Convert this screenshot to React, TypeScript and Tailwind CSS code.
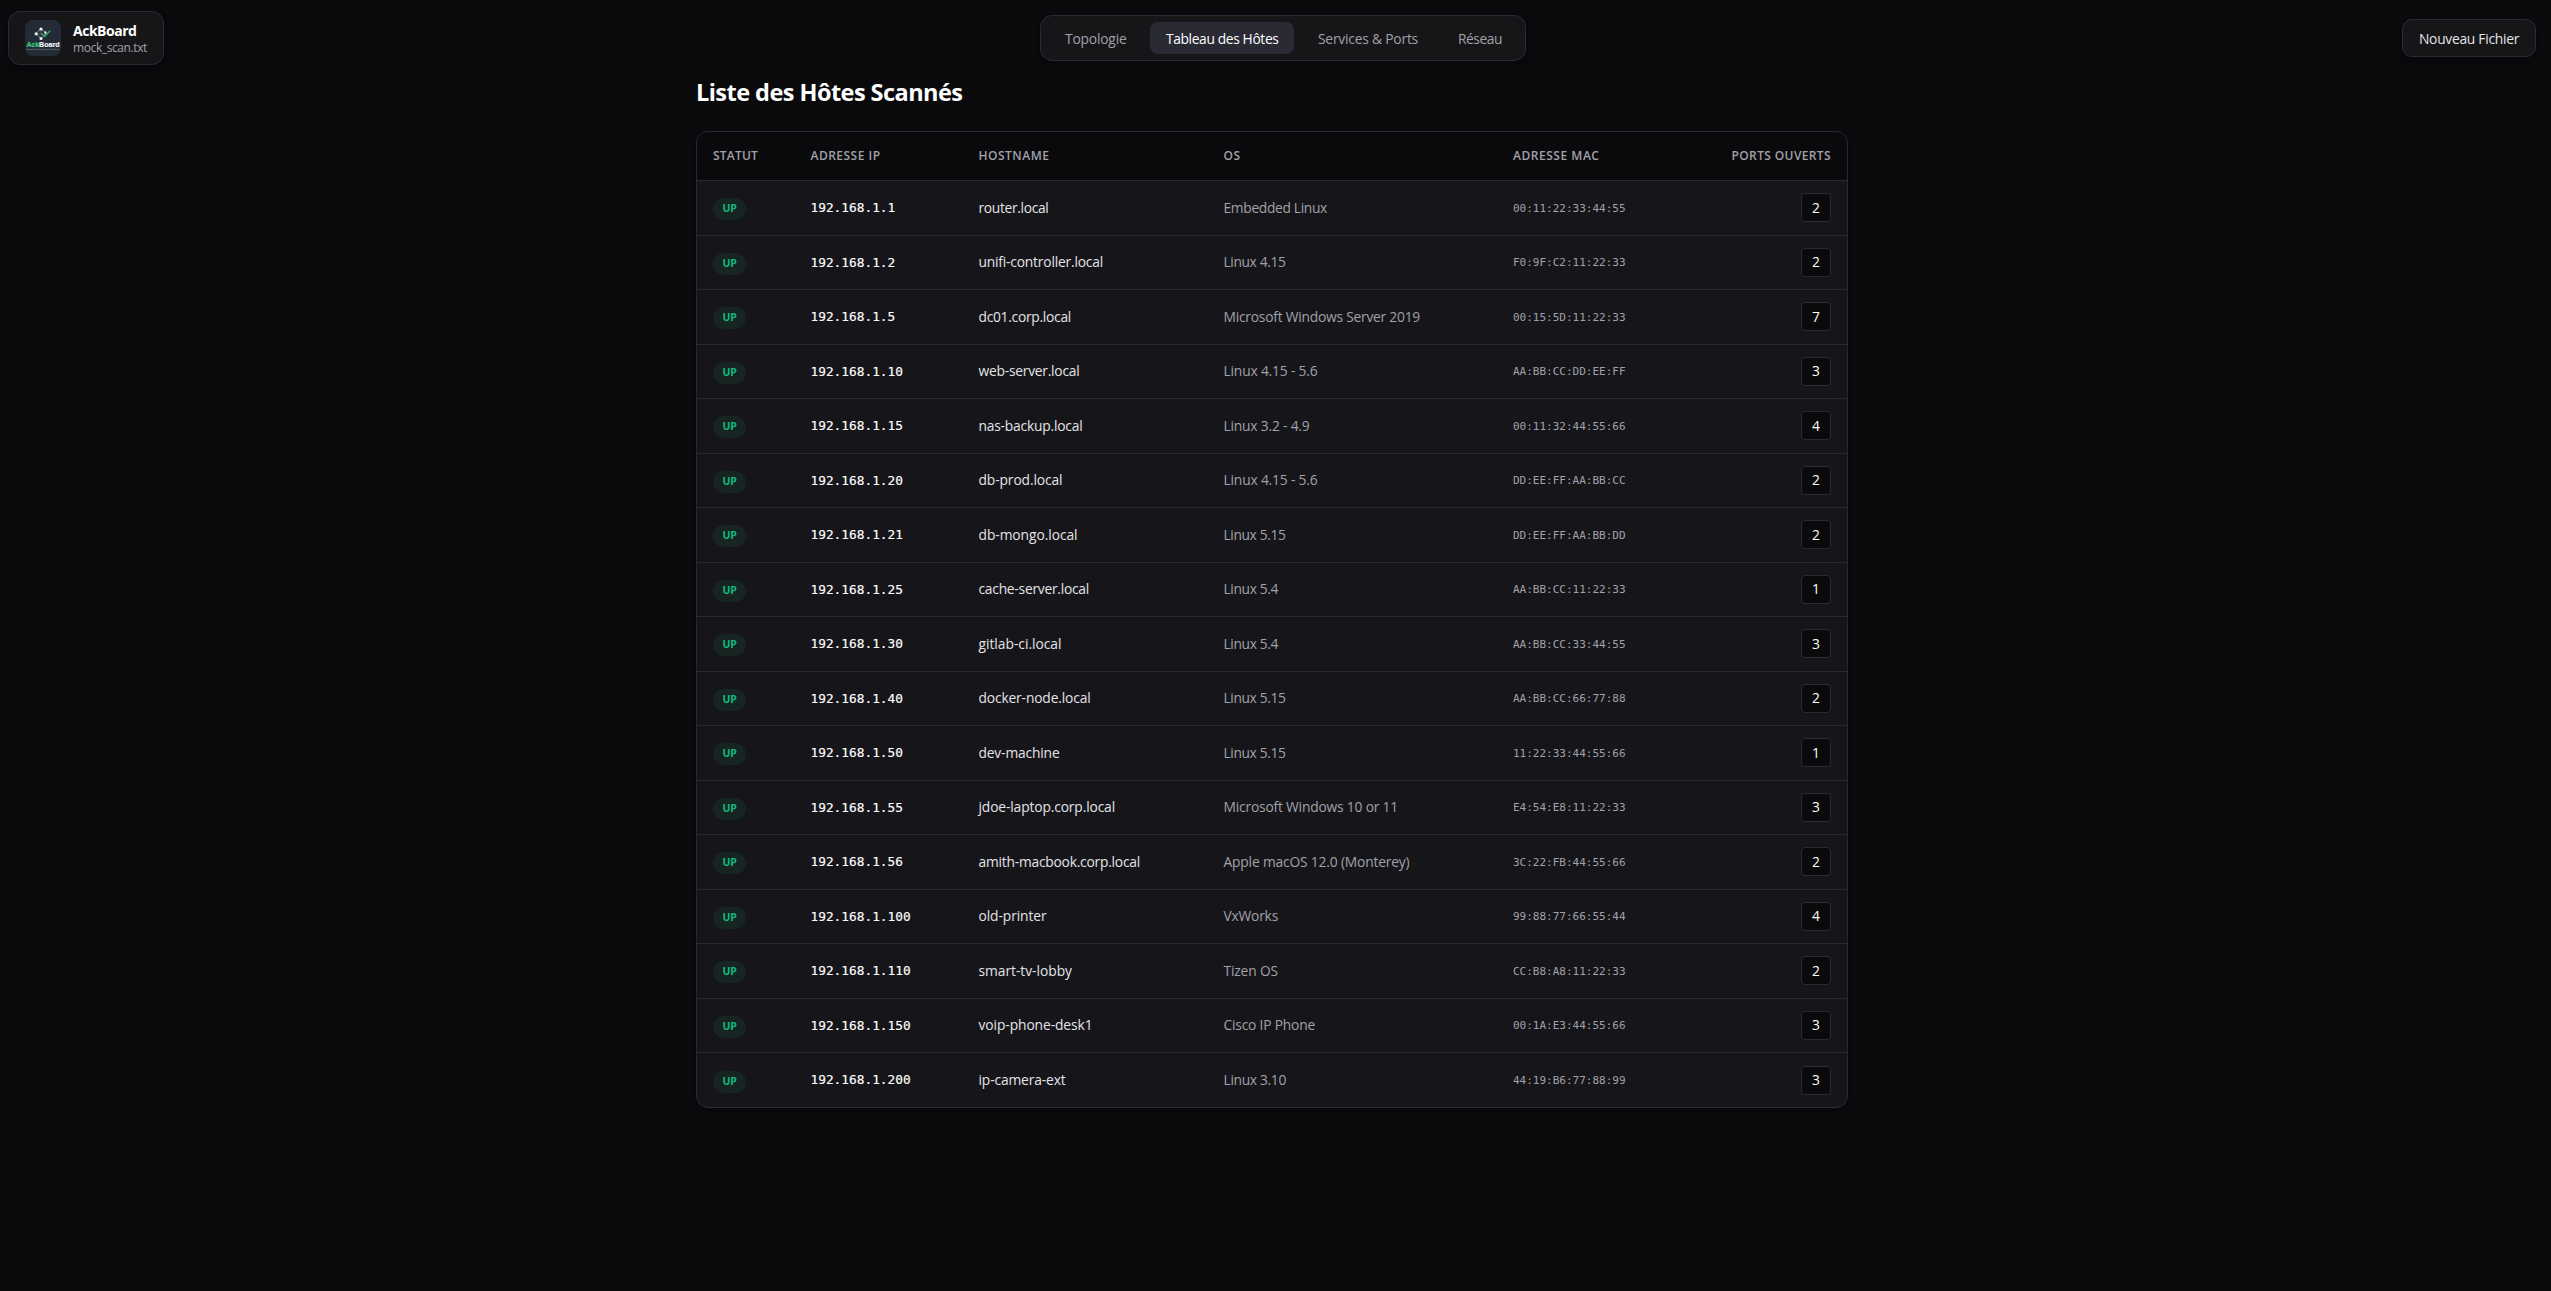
import React from "react";

type Host = [ip: string, name: string, os: string, mac: string, ports: number, nameW: number, osW: number];

const hosts: Host[] = [
  ["192.168.1.1", "router.local", "Embedded Linux", "00:11:22:33:44:55", 2, 70, 103.5],
  ["192.168.1.2", "unifi-controller.local", "Linux 4.15", "F0:9F:C2:11:22:33", 2, 124.5, 62],
  ["192.168.1.5", "dc01.corp.local", "Microsoft Windows Server 2019", "00:15:5D:11:22:33", 7, 92.5, 196.5],
  ["192.168.1.10", "web-server.local", "Linux 4.15 - 5.6", "AA:BB:CC:DD:EE:FF", 3, 101, 94],
  ["192.168.1.15", "nas-backup.local", "Linux 3.2 - 4.9", "00:11:32:44:55:66", 4, 104, 86],
  ["192.168.1.20", "db-prod.local", "Linux 4.15 - 5.6", "DD:EE:FF:AA:BB:CC", 2, 84, 94],
  ["192.168.1.21", "db-mongo.local", "Linux 5.15", "DD:EE:FF:AA:BB:DD", 2, 99, 62],
  ["192.168.1.25", "cache-server.local", "Linux 5.4", "AA:BB:CC:11:22:33", 1, 110.5, 54.5],
  ["192.168.1.30", "gitlab-ci.local", "Linux 5.4", "AA:BB:CC:33:44:55", 3, 83, 54.5],
  ["192.168.1.40", "docker-node.local", "Linux 5.15", "AA:BB:CC:66:77:88", 2, 112, 62],
  ["192.168.1.50", "dev-machine", "Linux 5.15", "11:22:33:44:55:66", 1, 81, 62],
  ["192.168.1.55", "jdoe-laptop.corp.local", "Microsoft Windows 10 or 11", "E4:54:E8:11:22:33", 3, 136.5, 174.5],
  ["192.168.1.56", "amith-macbook.corp.local", "Apple macOS 12.0 (Monterey)", "3C:22:FB:44:55:66", 2, 161.5, 186],
  ["192.168.1.100", "old-printer", "VxWorks", "99:88:77:66:55:44", 4, 68, 54.5],
  ["192.168.1.110", "smart-tv-lobby", "Tizen OS", "CC:B8:A8:11:22:33", 2, 93.5, 54.5],
  ["192.168.1.150", "voip-phone-desk1", "Cisco IP Phone", "00:1A:E3:44:55:66", 3, 114, 91.5],
  ["192.168.1.200", "ip-camera-ext", "Linux 3.10", "44:19:B6:77:88:99", 3, 87, 62.5],
];

/** Text tracked so that it fills a given advance width. */
function Fit({ w, children }: { w: number; children: string }) {
  const ref = React.useRef<HTMLSpanElement>(null);
  const [ls, setLs] = React.useState(0);
  React.useLayoutEffect(() => {
    if (ref.current) {
      const natural = ref.current.getBoundingClientRect().width;
      setLs((w - natural) / children.length);
    }
  }, []);
  return (
    <span ref={ref} className="inline-block whitespace-pre" style={{ letterSpacing: `${ls}px` }}>
      {children}
    </span>
  );
}

const cols = "grid grid-cols-[97.5px_168px_245px_289.5px_206px_1fr] items-center px-4";

function Logo() {
  return (
    <svg viewBox="0 0 36 36" className="size-9 shrink-0 rounded-lg bg-[#222b36]">
      <path d="M16 8.5 L21 13.5 L16 18.5 L11 13.5 Z" fill="none" stroke="#8b9298" strokeWidth="1" />
      <path d="M13.5 13.5 H18 M16 11 V16" stroke="#4b5a60" strokeWidth="1" />
      <circle cx="16" cy="9" r="1.6" fill="#f2f4f5" />
      <circle cx="11.2" cy="13.8" r="1.6" fill="#f2f4f5" />
      <circle cx="16" cy="18.4" r="1.5" fill="#f2f4f5" />
      <circle cx="20.4" cy="12.6" r="1.3" fill="#d9dddf" />
      <path d="M16.6 13.4 L19.6 16.4 L25.2 10.8" fill="none" stroke="#2fa866" strokeWidth="1.4" />
      <g fontFamily="Liberation Sans, sans-serif" fontSize="7.4" fontWeight="700">
        <text x="1.4" y="27" textLength="12.6" lengthAdjust="spacingAndGlyphs" fill="#3ecb78" stroke="#3ecb78" strokeWidth=".2">Ack</text>
        <text x="14.1" y="27" textLength="20.4" lengthAdjust="spacingAndGlyphs" fill="#f3f5f6" stroke="#f3f5f6" strokeWidth=".2">Board</text>
      </g>
      <path d="M1.5 29.4 H34.5" stroke="#78828b" strokeWidth="1" strokeDasharray="1.6 .4" opacity=".75" />
    </svg>
  );
}

const tabs: { label: string; box: string; w: number; active?: boolean }[] = [
  { label: "Topologie", box: "w-[93px]", w: 61.5 },
  { label: "Tableau des Hôtes", box: "w-36", w: 112.5, active: true },
  { label: "Services & Ports", box: "w-[132px]", w: 100 },
  { label: "Réseau", box: "w-[75px]", w: 44 },
];

const headings: [string, number][] = [
  ["STATUT", 45],
  ["ADRESSE IP", 70],
  ["HOSTNAME", 71],
  ["OS", 17],
  ["ADRESSE MAC", 86.5],
  ["PORTS OUVERTS", 99.5],
];

export default function App() {
  return (
    <div className="flex h-[1291px] w-full flex-col overflow-hidden bg-[#0a0a0c] font-['Open_Sans',sans-serif] text-[13.8px] text-[#e4e4e7]">
      <header className="flex h-[76px] shrink-0 items-center pr-[15px] pl-2">
        <div className="flex w-[1032px] shrink-0">
          <div className="flex h-[54px] w-[156px] items-center gap-3 rounded-xl border border-[#2a2a35] bg-[#161618] px-4 shadow-md">
            <Logo />
            <div className="flex flex-col pt-px">
              <span className="text-[14px] leading-[17px] font-bold text-white"><Fit w={63.5}>AckBoard</Fit></span>
              <span className="text-[12px] leading-[17px] text-[#a1a1aa]"><Fit w={74}>mock_scan.txt</Fit></span>
            </div>
          </div>
        </div>
        <nav className="flex h-[46px] w-[486px] shrink-0 items-center gap-2 rounded-xl border border-[#2a2a35] bg-[#161618] px-2 shadow-md">
          {tabs.map((t) => (
            <button
              key={t.label}
              className={`flex h-8 items-center rounded-lg px-4 pt-0.5 ${t.box} ${t.active ? "bg-[#2a2a35] text-white" : "text-[#a1a1aa]"}`}
            >
              <Fit w={t.w}>{t.label}</Fit>
            </button>
          ))}
        </nav>
        <div className="flex flex-1 justify-end">
          <button className="flex h-[38px] w-[134px] items-center justify-center rounded-[10px] border border-[#2a2a35] bg-[#161618] pt-0.5 shadow-md">
            <Fit w={100}>Nouveau Fichier</Fit>
          </button>
        </div>
      </header>
      <main className="ml-[696px] w-[1152px]">
        <h1 className="h-[55px] text-[23.5px] leading-[33px] font-bold text-white"><Fit w={266.5}>Liste des Hôtes Scannés</Fit></h1>
        <section className="overflow-hidden rounded-xl border border-[#2a2a35] bg-[#16161a] shadow-md">
          <div className={`${cols} h-[49px] border-b border-[#2a2a35] bg-[#0a0a0c] text-[12px] font-semibold text-[#a1a1aa]`}>
            {headings.map(([label, w]) => (
              <div key={label} className="flex last:justify-end">
                <Fit w={w}>{label}</Fit>
              </div>
            ))}
          </div>
          {hosts.map(([ip, name, os, mac, ports, nameW, osW]) => (
            <div key={ip} className={`${cols} h-[54.5px] border-b border-[#2a2a35] last:h-[54px] last:border-b-0`}>
              <span className="mt-[3px] flex h-[22px] w-[33px] items-center justify-center rounded-full bg-[#162521] text-[10.5px] font-bold text-[#10b981]">
                <Fit w={14}>UP</Fit>
              </span>
              <span className="font-['DejaVu_Sans_Mono',monospace] text-[12.8px] text-white [-webkit-text-stroke:0.15px_white]">{ip}</span>
              <span className="pt-px"><Fit w={nameW}>{name}</Fit></span>
              <span className="pt-px text-[#a1a1aa]"><Fit w={osW}>{os}</Fit></span>
              <span className="pt-0.5 font-['DejaVu_Sans_Mono',monospace] text-[11px] text-[#a1a1aa]">{mac}</span>
              <span className="flex h-[29px] w-[30px] items-center justify-center justify-self-end rounded border border-[#2a2a35] bg-[#0a0a0c] pt-px text-white">
                {ports}
              </span>
            </div>
          ))}
        </section>
      </main>
    </div>
  );
}
